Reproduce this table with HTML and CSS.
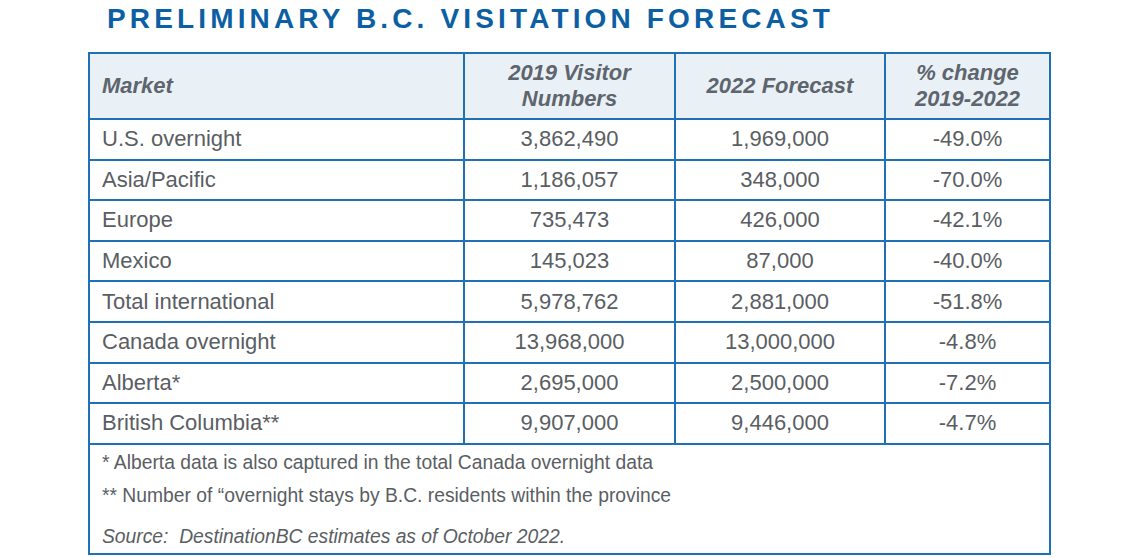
FILE: index.html
```html
<!DOCTYPE html>
<html lang="en">
<head>
<meta charset="utf-8">
<title>Preliminary B.C. Visitation Forecast</title>
<link rel="stylesheet" href="styles.css">
</head>
<body>
<div class="page">
  <h1 class="title">PRELIMINARY B.C. VISITATION FORECAST</h1>
  <table class="forecast">
    <colgroup>
      <col class="c-market">
      <col class="c-2019">
      <col class="c-2022">
      <col class="c-change">
    </colgroup>
    <thead>
      <tr class="head-row">
        <th class="left">Market</th>
        <th>2019 Visitor<br>Numbers</th>
        <th>2022 Forecast</th>
        <th>% change<br>2019-2022</th>
      </tr>
    </thead>
    <tbody>
      <tr><td class="left">U.S. overnight</td><td>3,862,490</td><td>1,969,000</td><td>-49.0%</td></tr>
      <tr><td class="left">Asia/Pacific</td><td>1,186,057</td><td>348,000</td><td>-70.0%</td></tr>
      <tr><td class="left">Europe</td><td>735,473</td><td>426,000</td><td>-42.1%</td></tr>
      <tr><td class="left">Mexico</td><td>145,023</td><td>87,000</td><td>-40.0%</td></tr>
      <tr><td class="left">Total international</td><td>5,978,762</td><td>2,881,000</td><td>-51.8%</td></tr>
      <tr><td class="left">Canada overnight</td><td>13,968,000</td><td>13,000,000</td><td>-4.8%</td></tr>
      <tr><td class="left">Alberta*</td><td>2,695,000</td><td>2,500,000</td><td>-7.2%</td></tr>
      <tr><td class="left">British Columbia**</td><td>9,907,000</td><td>9,446,000</td><td>-4.7%</td></tr>
      <tr class="notes-row">
        <td colspan="4" class="notes">
          <div class="note">* Alberta data is also captured in the total Canada overnight data</div>
          <div class="note">** Number of “overnight stays by B.C. residents within the province</div>
          <div class="note source">Source:&nbsp; DestinationBC estimates as of October 2022.</div>
        </td>
      </tr>
    </tbody>
  </table>
</div>
</body>
</html>
```

FILE: styles.css
```css
html, body {
  margin: 0;
  padding: 0;
  background: #ffffff;
}

.page {
  width: 1145px;
  height: 557px;
  overflow: hidden;
  font-family: "Liberation Sans", Arial, sans-serif;
}

.title {
  margin: 0;
  padding-left: 107px;
  height: 52px;
  line-height: 37px;
  font-size: 28px;
  font-weight: bold;
  letter-spacing: 4.15px;
  color: #0c5fa3;
}

.forecast {
  margin-left: 88px;
  width: 961px;
  border-collapse: collapse;
  table-layout: fixed;
  color: #5a5e63;
}

.c-market { width: 375px; }
.c-2019 { width: 211px; }
.c-2022 { width: 210px; }
.c-change { width: 165px; }

.forecast th,
.forecast td {
  border: 2px solid #2070b6;
  padding: 0 12px;
  text-align: center;
  font-size: 22px;
}

.forecast th {
  background: #eaf1f6;
  font-style: italic;
  font-weight: bold;
  line-height: 26px;
  color: #5e656e;
}

.head-row { height: 66px; }

.forecast tbody tr { height: 40.6px; }

.forecast .left { text-align: left; }

.forecast tbody tr.notes-row { height: 110px; }

.forecast td.notes {
  text-align: left;
  vertical-align: top;
  padding-top: 1px;
  font-size: 19.3px;
}

.note { line-height: 33px; }

.source {
  margin-top: 8px;
  font-style: italic;
}
```
